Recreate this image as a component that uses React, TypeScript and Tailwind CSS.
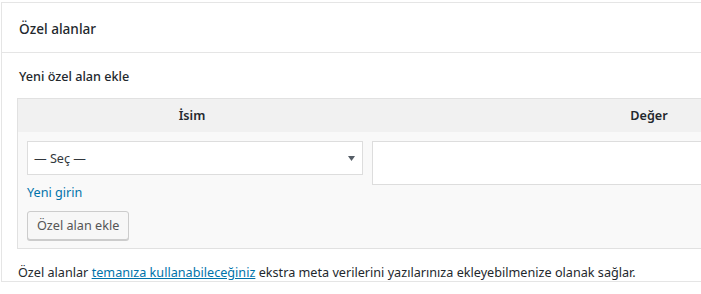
export default function App() {
  return (
    <div
      className="w-[701px] h-[294px] overflow-hidden bg-white text-[12.65px] text-[#23282d]"
      style={{ fontFamily: '"Noto Sans", "Open Sans", sans-serif' }}
    >
      <div className="mt-[2px] ml-[1px] w-[960px] border border-[#e5e5e5] bg-white">
        {/* Header */}
        <div className="h-[50px] flex items-center pl-[17px] pt-[2px] border-b border-[#e5e5e5]">
          <h2 className="text-[13.6px] font-medium leading-none">Özel alanlar</h2>
        </div>

        <div className="pl-[15px] pt-[14px]">
          <p className="pl-[2px] font-medium leading-[18px]">Yeni özel alan ekle</p>

          <table className="mt-[13px] w-[916px] border border-[#e1e1e1] bg-[#f9f9f9] border-separate border-spacing-0">
            <thead>
              <tr className="bg-[#f1f1f1]">
                <th className="w-[38%] h-[33px] font-semibold text-center">İsim</th>
                <th className="h-[33px] font-semibold text-center">Değer</th>
              </tr>
            </thead>
            <tbody>
              <tr>
                <td className="align-top pl-[9px] pr-[3px] pt-[9px] pb-[8px]">
                  <div className="relative h-[34px] w-[336px] border border-[#ddd] bg-white flex items-center pl-[6px] text-[#32373c]">
                    — Seç —
                    <svg
                      className="absolute right-[7px] top-[14px]"
                      width="7"
                      height="5"
                      viewBox="0 0 7 5"
                    >
                      <path d="M0 0 H7 L3.5 5 Z" fill="#555d66" />
                    </svg>
                  </div>
                  <a className="block mt-[8px] text-[#0073aa] leading-[19px]">Yeni girin</a>
                  <button className="mt-[9px] h-[29px] px-[9px] border border-[#ccc] bg-[#f7f7f7] rounded-[3px] shadow-[0_1px_0_#ccc] text-[#555] text-[12.65px]">
                    Özel alan ekle
                  </button>
                </td>
                <td className="align-top pl-[6px] pt-[9px]">
                  <div className="h-[44px] w-full border border-[#ddd] bg-white" />
                </td>
              </tr>
            </tbody>
          </table>

          <p className="pl-[1px] mt-[14px] leading-[18px]">
            Özel alanlar{" "}
            <a className="text-[#0073aa] underline">temanıza kullanabileceğiniz</a>{" "}
            ekstra meta verilerini yazılarınıza ekleyebilmenize olanak sağlar.
          </p>
        </div>
      </div>
    </div>
  );
}
